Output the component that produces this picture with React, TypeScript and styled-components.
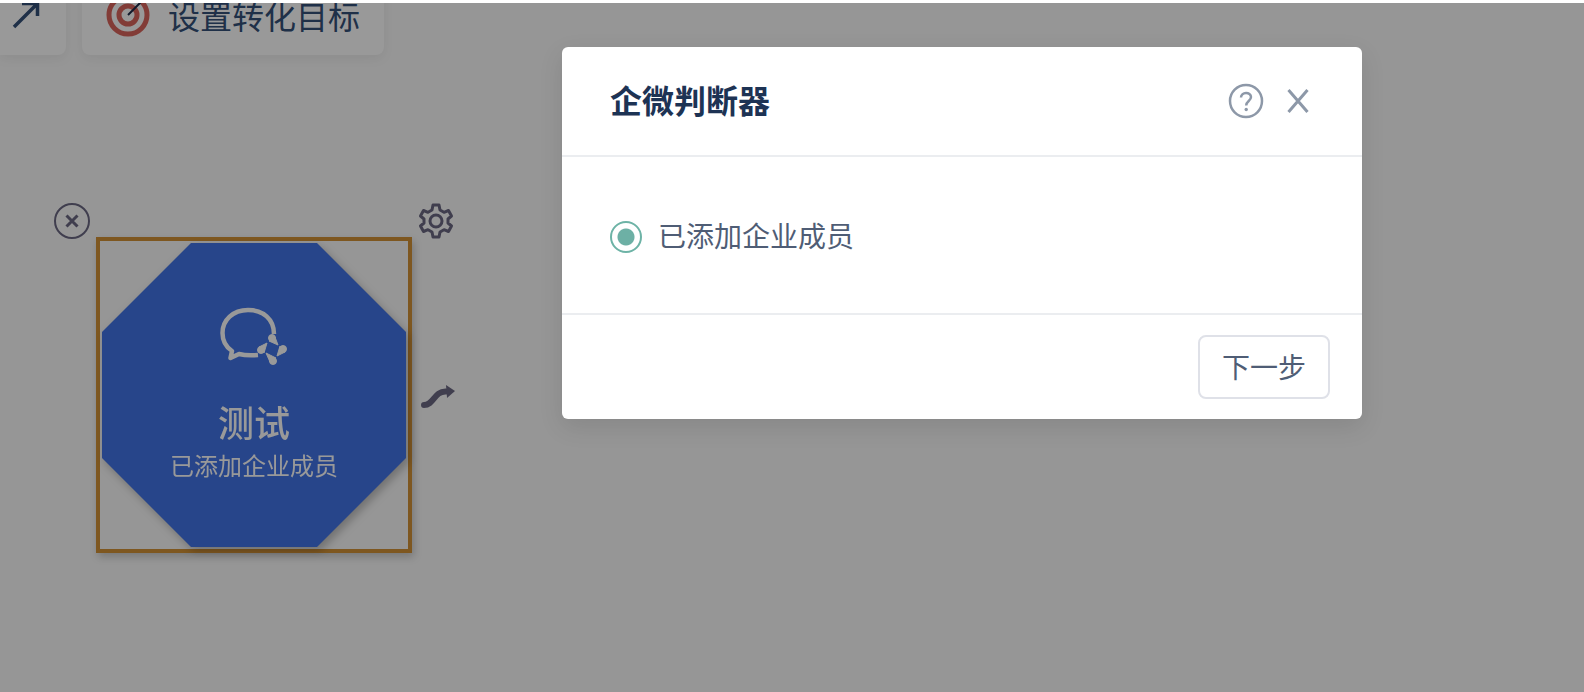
import React from 'react';
import styled, { createGlobalStyle } from 'styled-components';

const GlobalStyle = createGlobalStyle`
  * { box-sizing: border-box; }
  body {
    margin: 0;
    background: #ffffff;
    font-family: "Noto Sans CJK SC", sans-serif;
    color: #1d3354;
  }
  button { font-family: inherit; cursor: pointer; }
`;

const Page = styled.div`
  display: flex;
  flex-direction: column;
  min-height: 100vh;
  padding-top: 3px;
`;

const Workspace = styled.main`
  position: relative;
  flex: 1;
  overflow: hidden;
  background: #fafafa;
`;

const Toolbar = styled.div`
  display: flex;
  align-items: flex-end;
  gap: 16px;
  height: 52px;
`;

const ToolButton = styled.button<{ $flushLeft?: boolean }>`
  display: flex;
  flex-shrink: 0;
  align-items: center;
  gap: 18px;
  height: 76px;
  padding: ${(p) => (p.$flushLeft ? '0 26px 4px 12px' : '0 24px 4px')};
  border: 0;
  border-radius: ${(p) => (p.$flushLeft ? '0 8px 8px 0' : '8px')};
  background: #ffffff;
  box-shadow: 0 4px 12px rgba(0, 0, 0, 0.06);
  color: #345078;
  font-size: 32px;
  line-height: 32px;
`;

const Node = styled.section`
  position: absolute;
  top: 234px;
  left: 96px;
  width: 316px;
  height: 316px;
  padding: 2px;
  border: 4px solid #d39236;
  box-shadow: 2px 4px 8px rgba(0, 0, 0, 0.2);
`;

const NodeShadow = styled.div`
  filter: drop-shadow(3px 4px 4px rgba(0, 0, 0, 0.25));
`;

const NodeShape = styled.div`
  display: flex;
  flex-direction: column;
  align-items: center;
  height: 304px;
  padding-top: 64px;
  clip-path: polygon(89px 0, 215px 0, 100% 89px, 100% 215px, 215px 100%, 89px 100%, 0 215px, 0 89px);
  background: #4173e6;
  color: #ffffff;
`;

const NodeTitle = styled.h3`
  margin: 30px 0 2px;
  font-size: 36px;
  font-weight: 500;
  line-height: 48px;
`;

const NodeCaption = styled.p`
  margin: 0;
  font-size: 24px;
  line-height: 36px;
`;

const NodeAction = styled.button<{ $top: number; $left: number }>`
  position: absolute;
  top: ${(p) => p.$top}px;
  left: ${(p) => p.$left}px;
  width: 40px;
  height: 40px;
  padding: 0;
  border: 0;
  background: transparent;
  color: #6b6883;

  svg { display: block; }
`;

const Overlay = styled.div`
  position: absolute;
  inset: 3px 0 0;
  display: flex;
  align-items: flex-start;
  justify-content: flex-end;
  padding: 44px 222px 44px 44px;
  background: rgba(0, 0, 0, 0.4);
`;

const Dialog = styled.div`
  width: 100%;
  max-width: 800px;
  border-radius: 6px;
  background: #ffffff;
  box-shadow: 0 8px 24px rgba(0, 0, 0, 0.1);
`;

const DialogHeader = styled.header`
  display: flex;
  align-items: center;
  gap: 16px;
  height: 110px;
  padding: 0 46px 0 48px;
  border-bottom: 2px solid #ebedf0;
`;

const DialogTitle = styled.h2`
  flex: 1;
  margin: 0;
  padding-bottom: 4px;
  font-size: 32px;
  font-weight: 700;
  line-height: 48px;
`;

const IconButton = styled.button`
  width: 36px;
  height: 36px;
  padding: 0;
  border: 0;
  background: transparent;
  color: #8d98a8;

  svg { display: block; }
`;

const DialogBody = styled.div`
  padding: 56px 48px;
`;

const Option = styled.label`
  display: flex;
  align-items: center;
  gap: 16px;
  color: #4f5d75;
  font-size: 28px;
  line-height: 44px;
`;

const Radio = styled.input`
  appearance: none;
  width: 32px;
  height: 32px;
  margin: 4px 0 0;
  border: 2px solid #6db3a6;
  border-radius: 50%;
  background: #ffffff;

  &:checked {
    background: radial-gradient(circle, #6db0a5 8px, #ffffff 9px);
  }
`;

const DialogFooter = styled.footer`
  display: flex;
  justify-content: flex-end;
  padding: 20px 32px;
  border-top: 2px solid #ebedf0;
`;

const NextButton = styled.button`
  height: 64px;
  padding: 0 22px 2px;
  border: 2px solid #dfe1e8;
  border-radius: 8px;
  background: #ffffff;
  color: #4f5d75;
  font-size: 28px;
  line-height: 44px;
`;

const ArrowIcon = () => (
  <svg width="28" height="32" viewBox="0 0 28 32" fill="none" stroke="currentColor" strokeWidth="3.500">
    <path d="M2 28 L25 5 M10 4.500 H25.500 V17" />
  </svg>
);

const TargetIcon = () => (
  <svg width="44" height="44" viewBox="0 0 44 44" fill="none">
    <circle cx="22" cy="22" r="19" stroke="#d9655c" strokeWidth="5" />
    <circle cx="22" cy="22" r="9" stroke="#d9655c" strokeWidth="5" />
    <path d="M22 22 L38 6" stroke="#1d2b48" strokeWidth="2" />
  </svg>
);

const ChatIcon = () => (
  <svg width="68" height="60" viewBox="0 0 68 60" fill="none">
    <path
      d="M54 27 C54 12 43 3 28 3 C13 3 2.500 13 2.500 26 C2.500 34 6 40 12 44 L10.500 51 L19 47 C25 48.500 32 48.500 38 48"
      stroke="#ffffff" strokeWidth="4.500" strokeLinejoin="round"
    />
    <g fill="#ffffff" stroke="#ffffff" strokeLinejoin="round">
      <circle cx="52" cy="31" r="3.500" />
      <path d="M49 34 L58 38 L55 30 Z" />
      <circle cx="63" cy="42" r="3.500" />
      <path d="M60 39 L57 49 L65 45 Z" />
      <circle cx="53" cy="54" r="3.500" />
      <path d="M56 51 L46 46 L50 55 Z" />
      <circle cx="41" cy="43" r="3.500" />
      <path d="M44 46 L47 36 L39 40 Z" />
    </g>
  </svg>
);

const RemoveIcon = () => (
  <svg width="40" height="40" viewBox="0 0 40 40" fill="none" stroke="currentColor">
    <circle cx="20" cy="20" r="17" strokeWidth="2" />
    <path d="M14.500 14.500 L25.500 25.500 M25.500 14.500 L14.500 25.500" strokeWidth="3" />
  </svg>
);

const GearIcon = () => (
  <svg width="40" height="40" viewBox="0 0 40 40" fill="none" stroke="currentColor" strokeWidth="3" strokeLinejoin="round">
    <path d="M17 4 H23 L24 9 L28 11.300 L32.500 9.500 L35.500 15 L32 18 V22 L35.500 25 L32.500 30.500 L28 28.700 L24 31 L23 36 H17 L16 31 L12 28.700 L7.500 30.500 L4.500 25 L8 22 V18 L4.500 15 L7.500 9.500 L12 11.300 L16 9 Z" />
    <circle cx="20" cy="20" r="6" />
  </svg>
);

const ConnectIcon = () => (
  <svg width="40" height="40" viewBox="0 0 40 40" fill="none">
    <path d="M6 28 C16 28 16 14 28 14.500" stroke="currentColor" strokeWidth="6" strokeLinecap="round" />
    <path d="M28 8 L37 14 L29 21 Z" fill="currentColor" />
  </svg>
);

const HelpIcon = () => (
  <svg width="36" height="36" viewBox="0 0 36 36" fill="none" stroke="currentColor">
    <circle cx="18" cy="18" r="16" strokeWidth="2.500" />
    <path d="M13 14.500 C13 8.500 23 8.500 23 14 C23 18 18.200 18 18.200 22.500" strokeWidth="2.500" />
    <circle cx="18.200" cy="26.500" r="1.700" fill="currentColor" stroke="none" />
  </svg>
);

const CloseIcon = () => (
  <svg width="36" height="36" viewBox="0 0 36 36" fill="none" stroke="currentColor" strokeWidth="3">
    <path d="M8.500 7 L27.500 29 M27.500 7 L8.500 29" />
  </svg>
);

export default function App() {
  return (
    <Page>
      <GlobalStyle />
      <Workspace>
        <Toolbar>
          <ToolButton $flushLeft aria-label="箭头">
            <ArrowIcon />
          </ToolButton>
          <ToolButton>
            <TargetIcon />
            设置转化目标
          </ToolButton>
        </Toolbar>
        <Node>
          <NodeShadow>
            <NodeShape>
              <ChatIcon />
              <NodeTitle>测试</NodeTitle>
              <NodeCaption>已添加企业成员</NodeCaption>
            </NodeShape>
          </NodeShadow>
        </Node>
        <NodeAction $top={198} $left={52} aria-label="删除"><RemoveIcon /></NodeAction>
        <NodeAction $top={198} $left={416} aria-label="设置"><GearIcon /></NodeAction>
        <NodeAction $top={374} $left={418} aria-label="连线"><ConnectIcon /></NodeAction>
      </Workspace>
      <Overlay>
        <Dialog role="dialog" aria-labelledby="dialog-title">
          <DialogHeader>
            <DialogTitle id="dialog-title">企微判断器</DialogTitle>
            <IconButton aria-label="帮助"><HelpIcon /></IconButton>
            <IconButton aria-label="关闭"><CloseIcon /></IconButton>
          </DialogHeader>
          <DialogBody>
            <Option>
              <Radio type="radio" name="condition" defaultChecked />
              已添加企业成员
            </Option>
          </DialogBody>
          <DialogFooter>
            <NextButton>下一步</NextButton>
          </DialogFooter>
        </Dialog>
      </Overlay>
    </Page>
  );
}
